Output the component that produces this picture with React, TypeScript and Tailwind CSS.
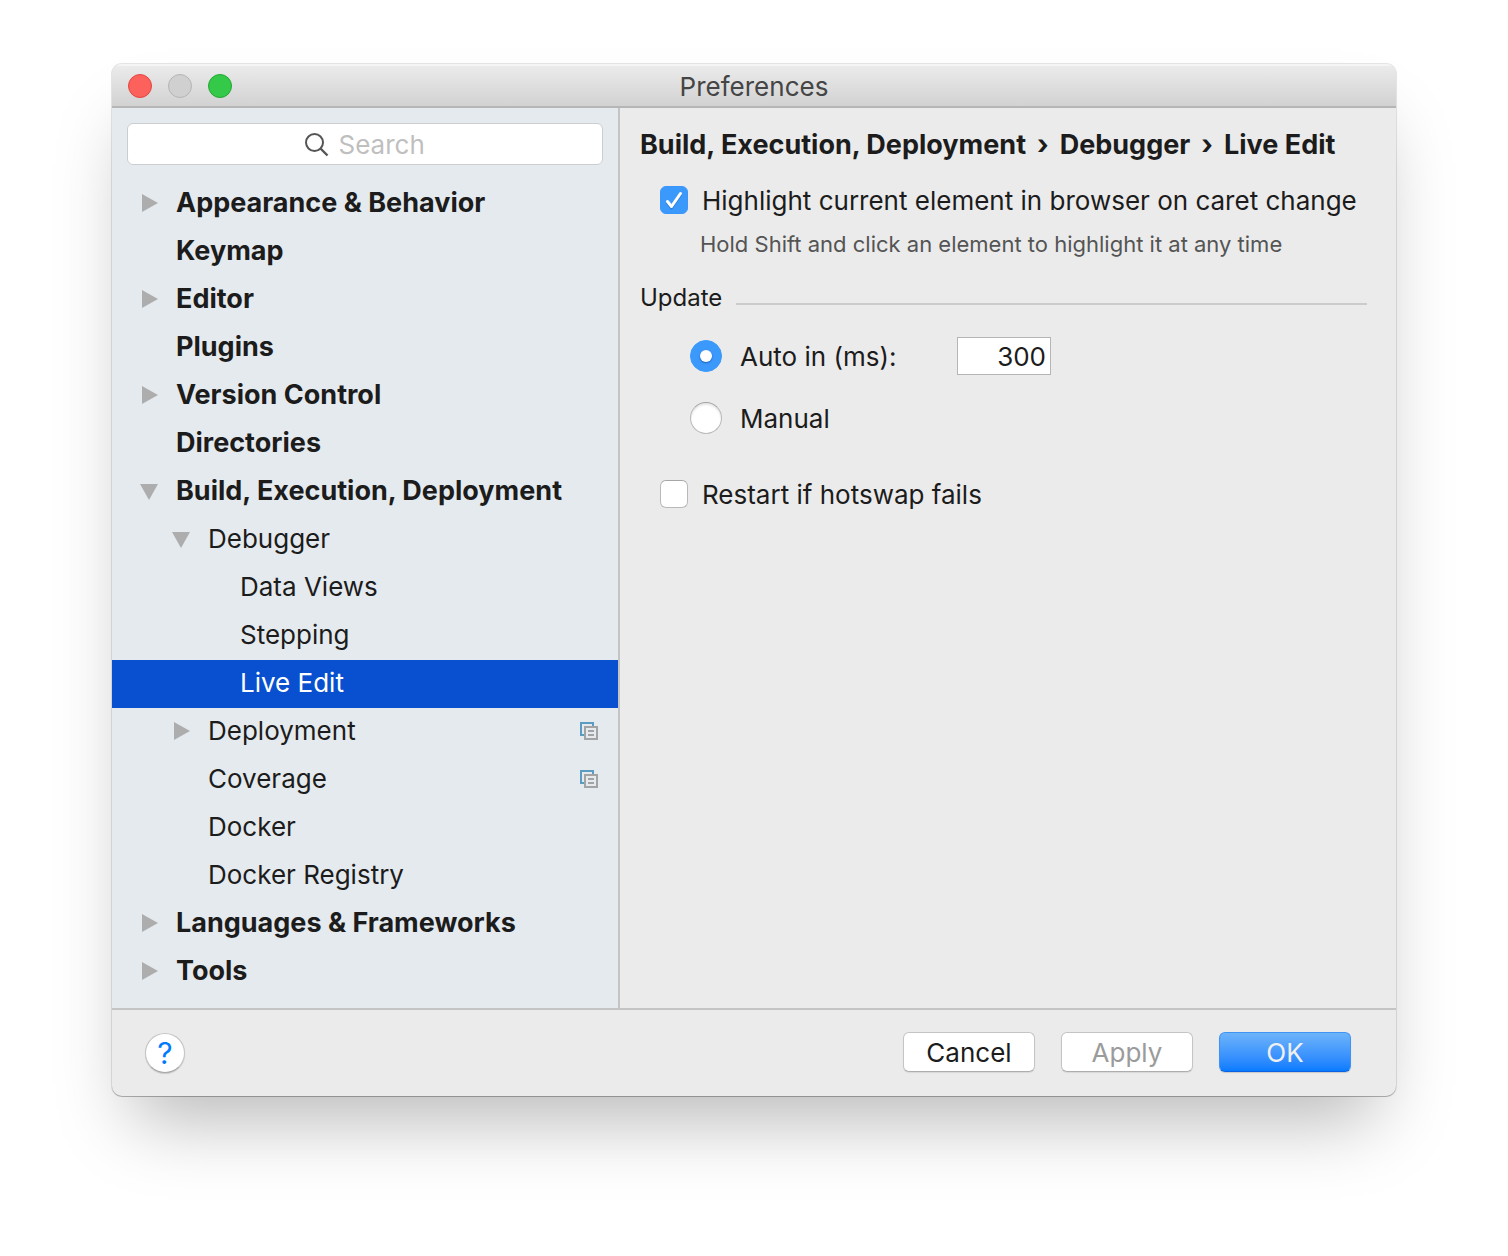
import { useState } from "react";

type Node = {
  label: string;
  level: 0 | 1 | 2;
  state?: "open" | "closed";
  project?: boolean;
};

const nodes: Node[] = [
  { label: "Appearance & Behavior", level: 0, state: "closed" },
  { label: "Keymap", level: 0 },
  { label: "Editor", level: 0, state: "closed" },
  { label: "Plugins", level: 0 },
  { label: "Version Control", level: 0, state: "closed" },
  { label: "Directories", level: 0 },
  { label: "Build, Execution, Deployment", level: 0, state: "open" },
  { label: "Debugger", level: 1, state: "open" },
  { label: "Data Views", level: 2 },
  { label: "Stepping", level: 2 },
  { label: "Live Edit", level: 2 },
  { label: "Deployment", level: 1, state: "closed", project: true },
  { label: "Coverage", level: 1, project: true },
  { label: "Docker", level: 1 },
  { label: "Docker Registry", level: 1 },
  { label: "Languages & Frameworks", level: 0, state: "closed" },
  { label: "Tools", level: 0, state: "closed" },
];

const indents = ["pl-7", "pl-[60px]", "pl-[92px]"];

function Arrow({ state }: { state?: "open" | "closed" }) {
  return (
    <svg width="18" height="18" viewBox="0 0 18 18" className="shrink-0" fill="#adadad" aria-hidden="true">
      {state === "closed" && <path d="M2 0 18 9 2 18Z" />}
      {state === "open" && <path d="M0 2H18L9 18Z" />}
    </svg>
  );
}

function ProjectIcon() {
  return (
    <svg width="18" height="18" viewBox="0 0 18 18" className="shrink-0" aria-hidden="true">
      <path d="M14 4V0H0V14H4V12H2V2H12V4Z" fill="#5b9dc0" />
      <path d="M5 5H17V17H5Z" fill="none" stroke="#a3a3a3" strokeWidth="2" />
      <path d="M8 8h6v2H8zM8 12h6v2H8z" fill="#a3a3a3" />
    </svg>
  );
}

function TreeRow({ node, selected, onSelect }: { node: Node; selected: boolean; onSelect: () => void }) {
  return (
    <li>
      <button
        type="button"
        onClick={onSelect}
        aria-current={selected}
        className={`flex h-12 w-full items-center gap-[18px] pr-5 pb-0.5 text-left ${indents[node.level]} ${
          selected ? "bg-[#0850d0] text-white" : ""
        } ${node.level === 0 ? "text-[27px] font-bold" : ""}`}
      >
        <Arrow state={node.state} />
        <span className="grow whitespace-nowrap">{node.label}</span>
        {node.project && <ProjectIcon />}
      </button>
    </li>
  );
}

function CheckBox({ label, initial }: { label: string; initial: boolean }) {
  const [on, setOn] = useState(initial);
  return (
    <label className="flex h-8 items-center gap-3.5">
      <span className="grid shrink-0 place-items-center">
        <input
          type="checkbox"
          checked={on}
          onChange={(e) => setOn(e.target.checked)}
          className="col-start-1 row-start-1 size-7 appearance-none rounded-md border border-[#b9b9b9] border-t-[#a6a6a6] bg-white checked:border-[#3b96fb] checked:bg-[#3b99fc]"
        />
        {on && (
          <svg
            width="28"
            height="28"
            viewBox="0 0 28 28"
            className="pointer-events-none col-start-1 row-start-1"
            fill="none"
            strokeLinecap="round"
            strokeLinejoin="round"
            strokeWidth="3"
            aria-hidden="true"
          >
            <path d="M7.5 17 11.5 22 20.5 9" stroke="#2b7fd8" />
            <path d="M7.5 15.5 11.5 20.5 20.5 7.5" stroke="#fff" />
          </svg>
        )}
      </span>
      <span className="pt-0.5">{label}</span>
    </label>
  );
}

function Radio({ label, checked, onChange }: { label: string; checked: boolean; onChange: () => void }) {
  return (
    <label className="flex h-8 items-center gap-[18px]">
      <span className="grid shrink-0 place-items-center">
        <input
          type="radio"
          name="update"
          checked={checked}
          onChange={onChange}
          className="col-start-1 row-start-1 size-8 appearance-none rounded-full border border-[#b9b9b9] border-t-[#a0a0a0] bg-white shadow-[inset_0_2px_2px_rgba(0,0,0,0.1)] checked:border-[#3b99fc] checked:bg-[#3b99fc] checked:shadow-none"
        />
        {checked && (
          <span className="pointer-events-none col-start-1 row-start-1 size-3 rounded-full bg-white shadow-[0_1px_2px_rgba(0,40,120,0.5)]" />
        )}
      </span>
      <span className="pt-0.5">{label}</span>
    </label>
  );
}

const plainButton =
  "h-10 w-[132px] rounded-md border border-[#c4c4c4] border-b-[#adadad] bg-white pt-0.5 shadow-[0_1px_1px_rgba(0,0,0,0.08)]";

export default function App() {
  const [selected, setSelected] = useState("Live Edit");
  const [mode, setMode] = useState("auto");
  const [delay, setDelay] = useState("300");

  return (
    <div className="min-h-screen bg-white px-28 pt-16 pb-40 font-['Inter',sans-serif] text-[26px] leading-8 text-[#1c1c1c]">
      <main className="overflow-hidden rounded-[10px] bg-[#ebebeb] shadow-[0_0_0_1px_rgba(0,0,0,0.1),0_1px_0_rgba(0,0,0,0.2),0_44px_70px_-20px_rgba(0,0,0,0.28)]">
        <header className="grid h-11 grid-cols-[1fr_auto_1fr] items-center border-b-2 border-[#b6b6b6] bg-linear-to-b from-[#ececec] to-[#d2d2d2] px-4 pt-0.5 shadow-[inset_0_2px_0_#f5f5f5]">
          <div className="flex gap-4">
            <button type="button" aria-label="Close" className="size-6 rounded-full border border-[#e24640] bg-[#fc615c]" />
            <button type="button" aria-label="Minimize" className="size-6 rounded-full border border-[#b4b4b4] bg-[#d0d0d0]" />
            <button type="button" aria-label="Zoom" className="size-6 rounded-full border border-[#24a732] bg-[#34c948]" />
          </div>
          <h1 className="pt-0.5 text-[#454545]">Preferences</h1>
        </header>

        <div className="flex">
          <aside className="w-[508px] shrink-0 border-r-2 border-[#c4c4c4] bg-[#e5eaee] pt-[15px] pb-3">
            <label className="mx-[15px] flex h-[42px] items-center justify-center gap-2.5 rounded-md border border-[#cbcdcf] bg-white pt-0.5">
              <svg width="24" height="24" viewBox="0 0 24 24" fill="none" stroke="#555" strokeWidth="2" aria-hidden="true">
                <circle cx="9.5" cy="9.5" r="8.5" />
                <path d="m15.5 15.5 7 7" strokeWidth="2.4" />
              </svg>
              <input
                type="text"
                aria-label="Search"
                placeholder="Search"
                className="w-[87px] bg-transparent outline-none placeholder:text-[#bfbfbf]"
              />
            </label>
            <nav aria-label="Settings" className="mt-[15px]">
              <ul>
                {nodes.map((n) => (
                  <TreeRow key={n.label} node={n} selected={n.label === selected} onSelect={() => setSelected(n.label)} />
                ))}
              </ul>
            </nav>
          </aside>

          <section className="min-w-0 grow pt-[21px] pr-[29px] pl-5">
            <h2 className="flex gap-[11px] text-[27px] font-bold whitespace-nowrap">
              <span>Build, Execution, Deployment</span>
              <span>›</span>
              <span>Debugger</span>
              <span>›</span>
              <span>Live Edit</span>
            </h2>
            <div className="mt-[23px] pl-5 whitespace-nowrap">
              <CheckBox label="Highlight current element in browser on caret change" initial={true} />
              <p className="mt-3 pl-10 text-[22px] text-[#545454]">Hold Shift and click an element to highlight it at any time</p>
            </div>
            <fieldset className="mt-[22px]">
              <legend className="flex w-full items-center gap-3.5 text-[24px]">
                Update
                <span className="mt-3 h-0.5 grow bg-[#cbcbcb]" />
              </legend>
              <div className="mt-[23px] flex h-[38px] items-center pl-[50px]">
                <div className="w-[267px]">
                  <Radio label="Auto in (ms):" checked={mode === "auto"} onChange={() => setMode("auto")} />
                </div>
                <input
                  type="text"
                  aria-label="Auto update delay in milliseconds"
                  value={delay}
                  onChange={(e) => setDelay(e.target.value)}
                  className="h-[38px] w-[94px] border border-[#b5b5b5] bg-white pr-1 text-right outline-none"
                />
              </div>
              <div className="mt-[27px] pl-[50px]">
                <Radio label="Manual" checked={mode === "manual"} onChange={() => setMode("manual")} />
              </div>
            </fieldset>
            <div className="mt-11 pl-5">
              <CheckBox label="Restart if hotswap fails" initial={false} />
            </div>
          </section>
        </div>

        <footer className="flex h-[88px] items-center justify-between border-t-2 border-[#c4c4c4] pr-[45px] pl-[33px]">
          <button
            type="button"
            aria-label="Help"
            className="size-10 rounded-full border border-[#c4c4c4] border-b-[#a8a8a8] bg-white text-[30px] text-[#007aff] shadow-[0_1px_1px_rgba(0,0,0,0.15)]"
          >
            ?
          </button>
          <div className="flex gap-[26px] pb-0.5">
            <button type="button" className={plainButton}>
              Cancel
            </button>
            <button type="button" disabled className={`${plainButton} text-[#9b9b9b]`}>
              Apply
            </button>
            <button
              type="button"
              className="h-10 w-[132px] rounded-md border border-[#3f94f2] border-b-[#0a62e0] bg-linear-to-b from-[#6cb3fa] to-[#067bff] pt-0.5 text-[#f0f0f0] shadow-[0_1px_1px_rgba(0,0,0,0.15)]"
            >
              OK
            </button>
          </div>
        </footer>
      </main>
    </div>
  );
}
